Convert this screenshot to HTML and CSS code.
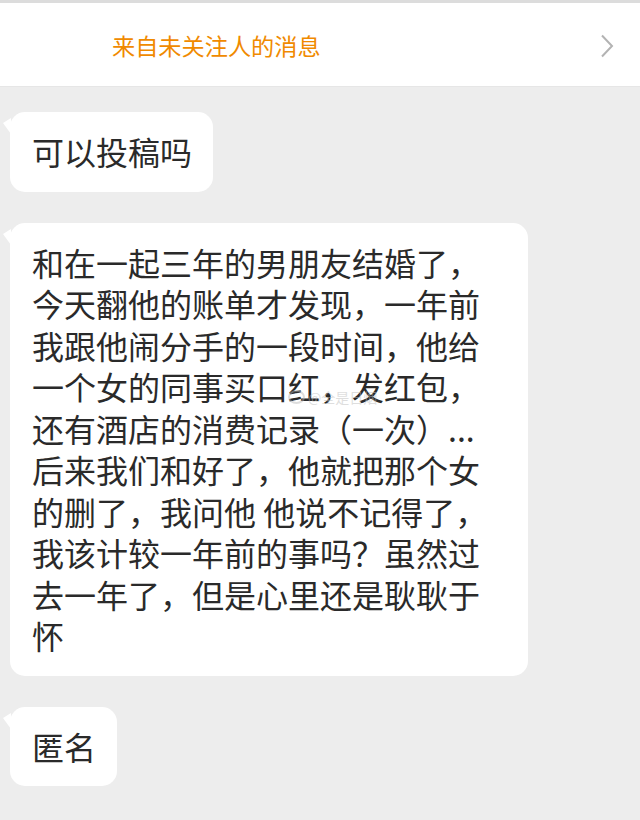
FILE: index.html
```html
<!DOCTYPE html>
<html lang="zh-CN">
<head>
  <meta charset="UTF-8" />
  <meta name="viewport" content="width=device-width, initial-scale=1.0"/>
  <title>来自未关注人的消息</title>
  <link rel="stylesheet" href="styles.css">
</head>
<body>
  <header class="topbar">
    <span class="title">来自未关注人的消息</span>
    <svg class="chevron" width="14" height="24" viewBox="0 0 14 24">
      <path d="M2 1.5 L12 12 L2 22.5" fill="none" stroke="#b3b3b3" stroke-width="2"/>
    </svg>
  </header>
  <main class="chat">
    <div class="bubble">可以投稿吗</div>
    <div class="bubble long">和在一起三年的男朋友结婚了，今天翻他的账单才发现，一年前我跟他闹分手的一段时间，他给一个女的同事买口红，发红包，还有酒店的消费记录（一次）...后来我们和好了，他就把那个女的删了，我问他 他说不记得了，我该计较一年前的事吗？虽然过去一年了，但是心里还是耿耿于怀
      <span class="watermark"><span class="wb-logo"></span>@全是日烟</span>
    </div>
    <div class="bubble">匿名</div>
  </main>
</body>
</html>
```

FILE: styles.css
```css
body { margin: 0; background: #ededed; font-family: "Noto Sans CJK SC", "Noto Sans", sans-serif; color: #2a2a2a; width: 640px; height: 820px; overflow: hidden; }
.topbar { display: flex; align-items: center; justify-content: space-between; height: 87px; border-top: 3px solid #dcdcdc; background: #fff; padding: 0 26px 0 112px; box-sizing: border-box; border-bottom: 1px solid #e6e6e6; }
.title { color: #f08a00; font-size: 23.2px; line-height: 1; margin-top: 2px; }
.chevron { display: block; margin-top: 2px; }
.chat { display: flex; flex-direction: column; align-items: flex-start; gap: 31px; padding: 25px 0 0 10px; }
.bubble { position: relative; background: #fff; border-radius: 15px; padding: 19px 21px 19px 22px; font-size: 32px; line-height: 41.5px; }
.bubble::before { content: ""; position: absolute; left: -7px; top: 6px; width: 0; height: 0; border-top: 5px solid transparent; border-bottom: 11px solid transparent; border-right: 8px solid #fff; }
.long { width: 462px; padding-right: 34px; }
.watermark { position: absolute; left: 278px; top: 166px; font-size: 14px; line-height: 16px; color: rgba(190, 190, 190, 0.5); display: flex; align-items: center; gap: 3px; }
.wb-logo { width: 13px; height: 10px; border: 2px solid rgba(180, 180, 180, 0.45); border-radius: 50%; }
```
